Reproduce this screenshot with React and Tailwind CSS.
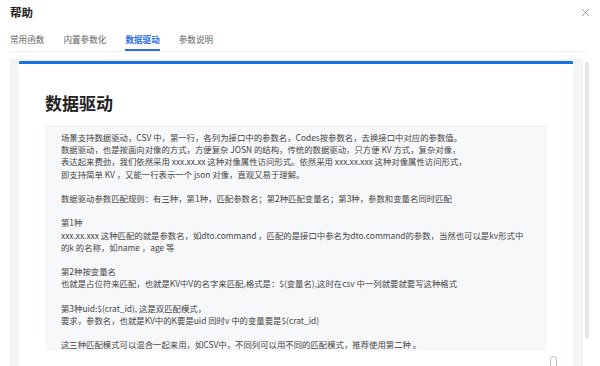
import React from "react";

const tabs = ["常用函数", "内置参数化", "数据驱动", "参数说明"];

const lines = [
  "场景支持数据驱动，CSV 中，第一行，各列为接口中的参数名，Codes按参数名，去换接口中对应的参数值。",
  "数据驱动，也是按面向对像的方式，方便复杂 JOSN 的结构，传统的数据驱动，只方便 KV 方式，复杂对像，",
  "表达起来费劲，我们依然采用 xxx.xx.xx 这种对像属性访问形式。依然采用 xxx.xx.xxx 这种对像属性访问形式，",
  "即支持简单 KV ，又能一行表示一个 json 对像，直观又易于理解。",
  "",
  "数据驱动参数匹配规则：有三种，第1种，匹配参数名；第2种匹配变量名；第3种，参数和变量名同时匹配",
  "",
  "第1种",
  "xxx.xx.xxx 这种匹配的就是参数名，如dto.command ，匹配的是接口中参名为dto.command的参数，当然也可以是kv形式中",
  "的k 的名称，如name ，age 等",
  "",
  "第2种按变量名",
  "也就是占位符来匹配，也就是KV中V的名字来匹配,格式是：$(变量名),这时在csv 中一列就要就要写这种格式",
  "",
  "第3种uid:$(crat_id), 这是双匹配模式，",
  "要求，参数名，也就是KV中的K要是uid 同时v 中的变量要是$(crat_id)",
  "",
  "这三种匹配模式可以混合一起来用，如CSV中，不同列可以用不同的匹配模式，推荐使用第二种 。",
];

export default function App() {
  return (
    <div
      className="relative w-[600px] h-[366px] overflow-hidden bg-white text-[#333]"
      style={{ fontFamily: '"Noto Sans CJK SC", "Noto Sans", sans-serif' }}
    >
      {/* Header */}
      <div className="flex items-center justify-between pl-[10px] pr-[10px] h-[25px] pt-[1px]">
        <span className="text-[11.5px] font-bold text-[#222]">帮助</span>
        <svg width="9" height="9" viewBox="0 0 9 9" className="mt-[-2px]">
          <path d="M1 1L8 8M8 1L1 8" stroke="#999" strokeWidth="0.9" />
        </svg>
      </div>

      {/* Tabs */}
      <div className="ml-[10px] mr-[12px] flex gap-[19px] border-b border-[#eef2f5] h-[27px]">
        {tabs.map((t) => (
          <div
            key={t}
            className={
              "flex items-center text-[8.6px] pt-[5px] " +
              (t === "数据驱动"
                ? "text-[#2f6fe4] font-bold border-b-2 border-[#2f6fe4]"
                : "text-[#666] border-b-2 border-transparent")
            }
          >
            {t}
          </div>
        ))}
      </div>

      {/* Content */}
      <div className="flex mt-[7px] ml-[10px] h-[310px]">
        <div className="w-[573px] bg-[#f3f4f6] pl-[9px] pr-[10px] pt-[2px]">
          <div className="h-full bg-white border-t-[3px] border-[#1a6fe0] rounded-t-[1px] px-[26px] pt-[27px]">
            <h1 className="text-[17px] font-bold leading-[24px] text-[#222]">数据驱动</h1>
            <div className="mt-[11px] border-t border-[#eceef1]" />
            <div className="bg-[#f7f8fa] pl-[16px] pt-[4px] pb-[1px] text-[8.4px] leading-[12.2px] text-[#444]">
              {lines.map((l, i) => (
                <div key={i} className="whitespace-nowrap h-[12.2px]">
                  {l}
                </div>
              ))}
            </div>
          </div>
        </div>
        <div className="ml-[2px] w-[4px] h-[277px] mt-[3px] bg-[#e6e6e6] rounded-full" />
      </div>

      {/* back-to-top hint */}
      <div className="absolute left-[550px] top-[356px] w-[7px] h-[16px] rounded-full border border-[#bbb]" />
    </div>
  );
}
